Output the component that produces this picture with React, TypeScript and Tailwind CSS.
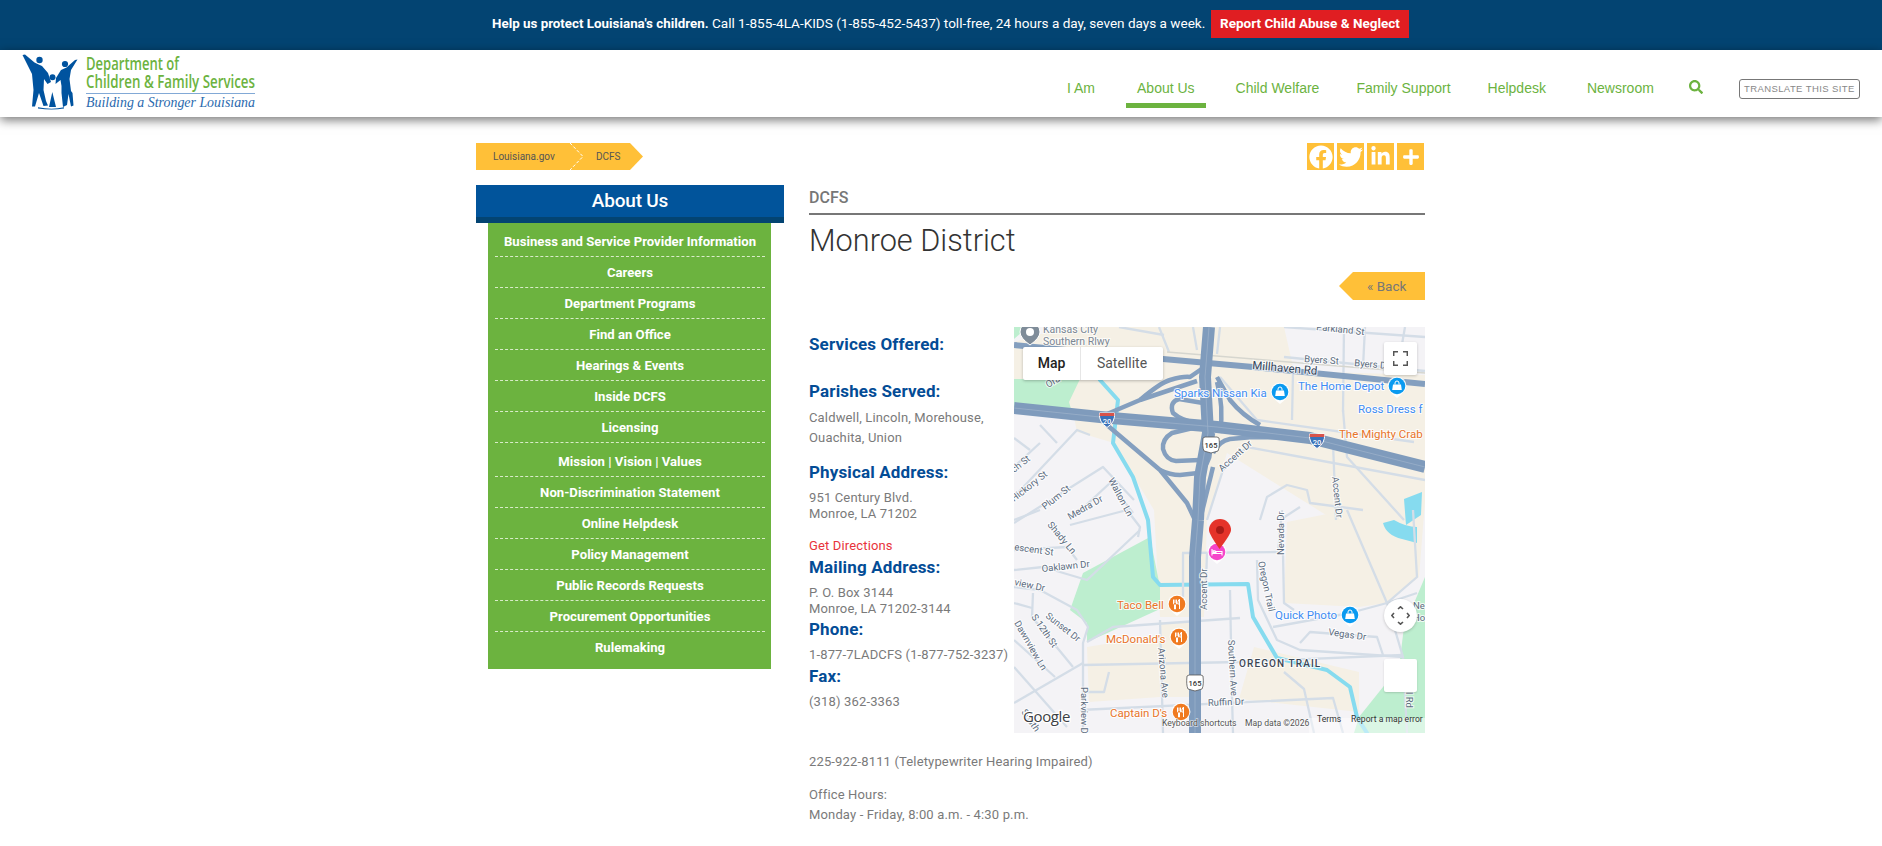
import React from "react";
import { FaFacebook, FaTwitter, FaLinkedinIn, FaPlus, FaSearch } from "react-icons/fa";

const sideItems: [string, string][] = [
  ["Business and Service Provider Information", "pt-[2px]"],
  ["Careers", "pt-[2px]"],
  ["Department Programs", "pt-[2px]"],
  ["Find an Office", "pt-[2px]"],
  ["Hearings & Events", "pt-[2px]"],
  ["Inside DCFS", "pt-[2px]"],
  ["Licensing", "pt-[2px]"],
  ["Mission | Vision | Values", "pt-[5px]"],
  ["Non-Discrimination Statement", "pt-[2px]"],
  ["Online Helpdesk", "pt-[2px]"],
  ["Policy Management", "pt-[2px]"],
  ["Public Records Requests", "pt-[2px]"],
  ["Procurement Opportunities", "pt-[2px]"],
  ["Rulemaking", "pt-[2px]"],
];

function Logo() {
  return (
    <svg width="240" height="64" viewBox="20 52 240 64" className="block">
      <path fill="#00539f" d="M22.5 55 L25 54.5 L34.5 62.5 Q39 64.5 42 66 L48 73 L51 82 L47.5 84 L44 79 L43.5 90 L46 101 L48 105.5 L43.5 106 L39 93 L35 106.5 L32 106.5 L33.5 90 L32 74 Z" />
      <circle cx="39.5" cy="60" r="3.2" fill="#00539f" />
      <circle cx="52.5" cy="77.3" r="3" fill="#00539f" />
      <path fill="#00539f" d="M77.5 59.5 L75 60 L66.5 67.5 L61 70 L56 78 L55.5 84 L60.5 80 L61.5 86 L61.5 93 L63 107 L67 105 L68.5 94 L71 106.5 L73.5 105.5 L72.5 93 L71 91 L69.5 79 L71 70 Z" />
      <circle cx="65" cy="64" r="3.1" fill="#00539f" />
      <path fill="#00539f" d="M52.3 92 L49 107 L56 107 Z M38 107.3 Q52 110 64 107.3 L64 108.5 Q52 110.7 38 108.5 Z" />
      <g fontFamily="'Open Sans',sans-serif" fontWeight="600" fill="#6cb33f">
        <text x="86" y="69.5" fontSize="18" textLength="93" lengthAdjust="spacingAndGlyphs">Department of</text>
        <text x="86" y="87.5" fontSize="18" textLength="169" lengthAdjust="spacingAndGlyphs">Children &amp; Family Services</text>
      </g>
      <rect x="86" y="93" width="169" height="1" fill="#82a9d6" />
      <text x="86" y="107" fontFamily="'Liberation Serif',serif" fontStyle="italic" fontSize="14" fill="#2a6aae" textLength="169" lengthAdjust="spacingAndGlyphs">Building a Stronger Louisiana</text>
    </svg>
  );
}

const major: string[] = [
  "M0 81 L86 90 L203 100 L296 111 L411 140",
  "M184 193 L186 150 L194 106 L191 50 L195 0",
  "M181 406 L181 230 L184 193",
];
const ramps: string[] = [
  "M86 90 L126 73 Q146 56 156 53 Q170 49 176 50 L189 41",
  "M126 73 L183 54",
  "M189 76 L165 72 Q155 75 159 86 Q168 94 183 96",
  "M183 100 L158 106 Q148 112 149 122 Q152 133 162 134 L186 133",
  "M93 98 L146 143 L173 176 L181 193",
  "M146 143 Q156 148 166 148 L184 146 Q196 136 196 125 L199 106",
  "M203 50 L216 73 Q228 88 246 98",
  "M203 55 Q210 80 206 106",
  "M199 126 Q205 114 216 112 L239 110 L296 111",
  "M186 193 L199 140",
];
const minor: string[] = [
  "M0 170 L63 103 L76 108", "M0 140 L26 116", "M0 111 L16 123", "M26 98 L43 116", "M0 196 L89 140 L120 173", "M56 193 L96 156 L119 186",
  "M193 193 L209 143 L233 120 L411 153", "M330 0 L329 85", "M279 46 L278 93", "M206 50 L243 93 L400 115", "M319 116 L322 193",
  "M329 83 L333 130 L390 193", "M246 193 L253 170 L273 158 L293 163 L296 176 L349 183", "M266 193 L286 180",
  "M270 0 L411 10", "M351 0 L349 40", "M391 0 L383 46", "M270 30 L411 44", "M105 0 L150 8", "M145 0 L155 25", "M179 0 L183 23", "M206 0 L203 27",
  "M0 243 L29 240 L73 253 L126 203", "M0 193 L26 183", "M0 223 L53 220 L63 233", "M56 198 L113 183 L126 200 L124 210",
  "M0 260 L26 263 L63 283 L74 300 L69 316 L69 406", "M19 266 L18 290 L59 340", "M0 276 L18 281", "M0 340 L53 400", "M0 376 L69 336", "M0 313 L41 350",
  "M73 315 L99 300 L226 291", "M69 338 L226 335 L389 328", "M66 383 L319 371 L329 406", "M146 293 L149 406", "M216 263 L218 370 L219 406",
  "M169 226 L169 280", "M193 226 L191 283", "M168 226 L263 225", "M268 183 L264 226", "M269 226 L270 276 L280 283",
  "M243 233 L244 273 L263 313 L286 323 L389 330", "M259 300 L336 286 L373 276 L403 266", "M286 316 L296 305 L363 310 L369 328",
  "M333 183 L373 276 L389 330 L393 406", "M399 183 L403 250 L373 276", "M270 345 L290 362 L300 406", "M70 365 L90 365 L95 345",
];

type L = [string, number, number, number];
const DARK = "#5b6b7d";
const roadLabels: L[] = [
  ["Parkland St", 302, 3, 6], ["Byers St", 290, 35, 4], ["Byers D", 340, 39, 5],
  ["Accent Dr", 208, 145, -42], ["Accent Dr", 318, 150, 84], ["ch St", 0, 146, -38], ["Hickory St", 0, 175, -38], ["Plum St", 31, 183, -38],
  ["Medra Dr", 56, 193, -30], ["Walton Ln", 94, 153, 62], ["Ora", 34, 61, -30], ["Shady Ln", 33, 198, 50], ["escent St", 0, 223, 8],
  ["Oaklawn Dr", 28, 245, -6], ["view Dr", 0, 258, 12], ["Sunset Dr", 31, 290, 38], ["S 12th St", 17, 290, 55], ["Dawnview Ln", 0, 296, 60],
  ["Parkview Dr", 67, 360, 90], ["Arizona Ave", 144, 321, 85], ["Accent Dr", 193, 283, -90], ["Oregon Trail", 244, 235, 78], ["Nevada Dr", 270, 228, -90],
  ["Southern Ave", 214, 313, 87], ["Vegas Dr", 314, 308, 8], ["Ruffin Dr", 194, 379, -2], ["Ne", 399, 282, 0], ["Ho", 399, 294, 0], ["l Rd", 392, 365, 90], ["South", 7, 385, 55],
];
const BLUE = "#3f8cf3";
const ORANGE = "#e8742a";
const poiLabels: [string, number, number, string][] = [
  ["Sparks Nissan Kia", 160, 70, BLUE], ["The Home Depot", 284, 63, BLUE], ["Ross Dress f", 344, 86, BLUE], ["The Mighty Crab", 325, 111, ORANGE],
  ["Taco Bell", 103, 282, ORANGE], ["McDonald's", 92, 316, ORANGE], ["Captain D's", 96, 390, ORANGE], ["Quick Photo", 261, 292, BLUE],
];

function Pin({ x, y, color, kind }: { x: number; y: number; color: string; kind: "bag" | "food" | "bed" }) {
  return (
    <g transform={`translate(${x} ${y})`}>
      <path d="M-9.5 0 A9.5 9.5 0 1 1 9.5 0 Q9 5 0 12 Q-9 5 -9.5 0 Z" fill="#fff" opacity="0.9" />
      <circle r="8.3" fill={color} />
      {kind === "bag" && (
        <g>
          <path d="M-4 -1.5 H4 L4.8 4 H-4.8 Z" fill="#fff" />
          <path d="M-2 -1.5 V-3 A2 2 0 0 1 2 -3 V-1.5" fill="none" stroke="#fff" strokeWidth="1" />
        </g>
      )}
      {kind === "food" && (
        <path d="M-3.5 -4.5 V-1 Q-3.5 0.5 -2.5 0.8 V5 H-1.5 V0.8 Q-0.5 0.5 -0.5 -1 V-4.5 M-2 -4.5 V-1 M2.5 5 V-5 Q0.7 -3.5 0.7 0 H2.5" fill="none" stroke="#fff" strokeWidth="1" />
      )}
      {kind === "bed" && <path d="M-5 -3 V3.5 M-5 1.5 H5 V3.5 M5 1.5 V-0.5 H-1 V1.5 M-3.7 -1.2 H-2 V0.6 H-3.7 Z" fill="none" stroke="#fff" strokeWidth="1.1" />}
    </g>
  );
}

function Shield({ x, y }: { x: number; y: number }) {
  return (
    <g transform={`translate(${x} ${y})`}>
      <path d="M-7.5 -7 H7.5 Q8.5 2 0 7.5 Q-8.5 2 -7.5 -7 Z" fill="#3a71b8" stroke="#fff" strokeWidth="1" />
      <path d="M-7.3 -7 H7.3 L7.3 -4 H-7.5 Z" fill="#d8534a" />
      <text x="0" y="3.5" textAnchor="middle" fontSize="7.5" fontWeight="500" fill="#fff" fontFamily="Roboto,sans-serif">20</text>
    </g>
  );
}

function US165({ x, y }: { x: number; y: number }) {
  return (
    <g transform={`translate(${x} ${y})`}>
      <path d="M-8 -7 L-6 -8 H6 L8 -7 Q9 2 7 6 L0 8 L-7 6 Q-9 2 -8 -7 Z" fill="#fff" stroke="#555" strokeWidth="0.8" />
      <text x="0" y="3" textAnchor="middle" fontSize="7.5" fontWeight="500" fill="#333" fontFamily="Roboto,sans-serif">165</text>
    </g>
  );
}

function MapArt() {
  return (
    <svg viewBox="0 0 411 406" className="block w-full h-full" fontFamily="Roboto,sans-serif">
      <rect width="411" height="406" fill="#f4f3f6" />
      <path fill="#f5f0e5" d="M50 0 L270 0 L280 44 L411 48 L411 175 L405 250 L373 276 L333 183 L320 193 L213 126 L193 193 L190 290 L146 290 L140 183 L120 150 L100 116 L63 105 L60 90 L0 85 L0 15 Z" />
      <path fill="#f5f0e5" d="M273 195 L333 183 L373 276 L345 280 L270 276 Z" />
      <path fill="#f5f0e5" d="M73 320 L146 308 L146 370 L75 375 Z" />
      <path fill="#f5f0e5" d="M147 295 L180 295 L180 370 L150 370 Z" />
      <path fill="#f5f0e5" d="M240 320 L345 345 L345 385 L225 372 Z" />
      <path fill="#bdeecf" d="M0 52 L66 52 L55 75 L60 92 L0 86 Z" />
      <path fill="#bdeecf" d="M0 0 L14 0 L0 12 Z" />
      <path fill="#bdeecf" d="M56 283 L69 246 L136 210 L146 260 L146 282 L100 303 L73 315 L73 296 Z" />
      <path fill="#bdeecf" d="M340 406 L411 406 L411 250 L390 300 L385 340 L345 390 Z" />
      <g fill="none" stroke="#86dbef" strokeLinejoin="round" strokeLinecap="round">
        <path strokeWidth="4" d="M86 53 L104 73 L99 116 L119 150 L134 193 L139 250 L146 258 L234 257 L239 290 L263 331 L313 343 L336 360 L343 390 L353 406" />
      </g>
      <path fill="#86dbef" d="M390 172 L408 165 L407 188 L392 198 Z M369 196 L380 193 Q392 200 403 200 L403 216 L388 212 Q372 208 369 196 Z" />
      <g fill="none" stroke="#d4dde7" strokeWidth="2.3" strokeLinejoin="round">
        {minor.map((d, i) => <path key={i} d={d} />)}
        <path d="M153 25 L411 46" stroke="#d6d6cf" strokeWidth="1.5" />
      </g>
      <path d="M0 18 L149 32 L239 40 L411 57" fill="none" stroke="#849fbf" strokeWidth="6" />
      <g fill="none" stroke="#849fbf" strokeLinejoin="round" strokeWidth="4.5">
        {ramps.map((d, i) => <path key={i} d={d} />)}
      </g>
      <g fill="none" strokeLinejoin="round">
        {major.map((d, i) => <path key={i} d={d} stroke="#7f9bbc" strokeWidth="12" />)}
        {major.map((d, i) => <path key={i} d={d} stroke="#9bb0c9" strokeWidth="0.8" />)}
      </g>
      <Shield x={93} y={93} />
      <Shield x={303} y={114} />
      <US165 x={197} y={118} />
      <US165 x={181} y={356} />
      <g fill={DARK} fontSize="9.5" stroke="#fff" strokeWidth="2" paintOrder="stroke" strokeOpacity="0.8">
        {roadLabels.map(([t, x, y, r], i) => (
          <text key={i} x={x} y={y} transform={`rotate(${r} ${x} ${y})`}>{t}</text>
        ))}
        <text x="238" y="42" transform="rotate(5 238 42)" fontSize="11.5" fill="#37465a">Millhaven Rd</text>
        <text x="225" y="340" fontSize="10" fontWeight="500" letterSpacing="1.1" fill="#3c4654">OREGON TRAIL</text>
      </g>
      <g fontSize="11.5" stroke="#fff" strokeWidth="2" paintOrder="stroke" strokeOpacity="0.85">
        {poiLabels.map(([t, x, y, c], i) => (
          <text key={i} x={x} y={y} fill={c}>{t}</text>
        ))}
      </g>
      <g fontSize="10.5" fill="#7b8794" stroke="#fff" strokeWidth="2" paintOrder="stroke" strokeOpacity="0.7">
        <text x="29" y="6">Kansas City</text>
        <text x="29" y="18">Southern Rlwy</text>
      </g>
      <path d="M16 18 Q6 11 6 5 A10 10 0 0 1 26 5 Q26 11 16 18 Z" fill="#7f8c99" stroke="#fff" strokeWidth="1" />
      <circle cx="16" cy="5" r="4" fill="#fff" />
      <Pin x={266} y={65} color="#0a9af0" kind="bag" />
      <Pin x={383} y={59} color="#0a9af0" kind="bag" />
      <Pin x={336} y={288} color="#0a9af0" kind="bag" />
      <Pin x={163} y={277} color="#f07a20" kind="food" />
      <Pin x={165} y={310} color="#f07a20" kind="food" />
      <Pin x={167} y={385} color="#f07a20" kind="food" />
      <Pin x={203} y={225} color="#f545c9" kind="bed" />
      <path d="M205.5 222 Q195 207 195 203 A11 11 0 0 1 217 203 Q217 207 205.5 222 Z" fill="#e5332a" />
      <circle cx="206" cy="203" r="4" fill="#a91b17" />
      <rect x="295" y="391" width="116" height="15" fill="#fff" opacity="0.45" />
      <g fill="#555" fontSize="8.6">
        <text x="148" y="399" stroke="#fff" strokeWidth="1.5" paintOrder="stroke" strokeOpacity="0.6">Keyboard shortcuts</text>
        <text x="231" y="399" stroke="#fff" strokeWidth="1.5" paintOrder="stroke" strokeOpacity="0.6">Map data ©2026</text>
        <text x="303" y="395" fill="#333">Terms</text>
        <text x="337" y="395" fill="#333">Report a map error</text>
      </g>
      <text x="9" y="395" fontSize="15" fontWeight="500" letterSpacing="-0.4" fontFamily="'Open Sans',sans-serif" fill="#3c4043" stroke="#fff" strokeWidth="2.5" paintOrder="stroke">Google</text>
    </svg>
  );
}

function Heading({ children, className }: { children: React.ReactNode; className: string }) {
  return <h3 className={`text-[17px] leading-[20px] font-bold text-[#034c96] tracking-[0.15px] ${className}`}>{children}</h3>;
}

export default function App() {
  return (
    <div className="min-h-[846px] bg-white font-['Roboto',sans-serif] text-[#7a7a7a] overflow-hidden">
      <div className="h-[50px] bg-[#034472] flex items-center pl-[492px] pb-[3px] text-white text-[13.55px]">
        <p className="w-[719px] whitespace-nowrap"><strong className="font-bold text-[13.35px]">Help us protect Louisiana's children.</strong> Call 1-855-4LA-KIDS (1-855-452-5437) toll-free, 24 hours a day, seven days a week.</p>
        <a className="w-[198px] h-[28px] bg-[#e01e22] flex items-center justify-center font-bold text-[13.5px]">Report Child Abuse &amp; Neglect</a>
      </div>

      <header className="relative z-10 h-[67px] bg-white flex shadow-[0_3px_10px_rgba(0,0,0,0.55)] font-['Liberation_Sans',sans-serif] text-[14px] text-[#6cb33f]">
        <div className="pl-[20px] pt-[2px] w-[1067px] shrink-0"><Logo /></div>
        <nav className="flex items-start">
          <a className="pt-[28px]">I Am</a>
          <a className="ml-[31px] px-[11px] pt-[28px] h-[58px] border-b-[5px] border-[#6cb33f]">About Us</a>
          <a className="ml-[30px] pt-[28px]">Child Welfare</a>
          <a className="ml-[37px] pt-[28px]">Family Support</a>
          <a className="ml-[37px] pt-[28px]">Helpdesk</a>
          <a className="ml-[41px] pt-[28px]">Newsroom</a>
          <span className="ml-[35px] pt-[30px] text-[14px]"><FaSearch /></span>
          <a className="ml-[36px] mt-[29px] w-[121px] h-[20px] border border-[#777] rounded-[3px] flex items-center justify-center text-[9.5px] tracking-[0.4px] text-[#888]">TRANSLATE THIS SITE</a>
        </nav>
      </header>

      <main className="pl-[476px] w-[1425px]">
        <div className="pt-[26px] flex justify-between items-start">
          <div className="flex h-[27px] w-[167px] text-[10px] leading-[27px] text-[#555] bg-[#ffc038] [clip-path:polygon(0_0,154px_0,100%_50%,154px_100%,0_100%)]">
            <a className="pl-[17px] w-[93px]">Louisiana.gov</a>
            <span className="relative w-[27px] shrink-0">
              <svg width="16" height="27" viewBox="0 0 16 27" className="absolute left-0 top-0">
                <path d="M1 0 L14 13.5 L1 27" fill="none" stroke="#fff" strokeWidth="1" strokeDasharray="3 2" />
              </svg>
            </span>
            <a>DCFS</a>
          </div>
          <div className="flex gap-[3px] mr-[1px] text-white">
            <span className="w-[27px] h-[27px] bg-[#ffc038] flex items-center justify-center text-[24px]"><FaFacebook /></span>
            <span className="w-[27px] h-[27px] bg-[#ffc038] flex items-center justify-center text-[24px]"><FaTwitter /></span>
            <span className="w-[27px] h-[27px] bg-[#ffc038] flex items-center justify-center text-[21px]"><FaLinkedinIn /></span>
            <span className="w-[27px] h-[27px] bg-[#ffc038] flex items-center justify-center text-[18px]"><FaPlus /></span>
          </div>
        </div>

        <div className="flex gap-[25px] pt-[15px] items-start">
          <aside className="w-[308px] shrink-0">
            <h2 className="h-[38px] bg-[#01549b] border-b-[6px] border-[#034472] text-white text-center text-[19px] tracking-[-0.2px] leading-[32px] font-medium">About Us</h2>
            <ul className="ml-[12px] mr-[13px] pl-[7px] pr-[6px] pt-[3px] pb-[7px] bg-[#6cb33f] text-white text-[13.15px] font-bold text-center">
              {sideItems.map(([t, c], i) => (
                <li key={i} className={`${c} leading-[28px] ${i < sideItems.length - 1 ? "border-b border-dashed border-[#d8ecc8]" : ""}`}>{t}</li>
              ))}
            </ul>
          </aside>

          <section className="w-[616px]">
            <div className="h-[30px] border-b-2 border-[#777] text-[16px] font-medium leading-[26px] text-[#777]">DCFS</div>
            <h1 className="pt-[7px] text-[30.7px] leading-[38px] font-light text-[#333]">Monroe District</h1>
            <div className="pt-[12px] flex justify-end">
              <a className="w-[86px] h-[28px] pl-[28px] leading-[28px] text-[13.5px] text-[#777] bg-[#ffc038] [clip-path:polygon(14px_0,100%_0,100%_100%,14px_100%,0_50%)]">« Back</a>
            </div>
            <div className="flex pt-[27px]">
              <div className="w-[205px] shrink-0 text-[13px] tracking-[0.15px] whitespace-nowrap">
                <Heading className="pt-[7px] box-content">Services Offered:</Heading>
                <Heading className="mt-[27px]">Parishes Served:</Heading>
                <p className="mt-[7px] leading-[20px]">Caldwell, Lincoln, Morehouse,<br />Ouachita, Union</p>
                <Heading className="mt-[14px]">Physical Address:</Heading>
                <p className="mt-[8px] leading-[16px]">951 Century Blvd.<br />Monroe, LA 71202</p>
                <p className="mt-[16px] leading-[16px] text-[#e8333b]">Get Directions</p>
                <Heading className="mt-[3px]">Mailing Address:</Heading>
                <p className="mt-[8px] leading-[16px]">P. O. Box 3144<br />Monroe, LA 71202-3144</p>
                <Heading className="mt-[2px]">Phone:</Heading>
                <p className="mt-[8px] leading-[16px]">1-877-7LADCFS (1-877-752-3237)</p>
                <Heading className="mt-[3px]">Fax:</Heading>
                <p className="mt-[8px] leading-[16px]">(318) 362-3363</p>
              </div>
              <div className="relative w-[411px] h-[406px] overflow-hidden">
                <MapArt />
                <div className="absolute left-[9px] top-[20px] h-[33px] flex bg-white rounded-[2px] shadow-[0_1px_3px_rgba(0,0,0,0.25)] text-[14px] leading-[33px]">
                  <span className="w-[58px] text-center font-medium text-[#222] border-r border-[#e6e6e6]">Map</span>
                  <span className="w-[82px] text-center text-[#565656]">Satellite</span>
                </div>
                <div className="absolute left-[370px] top-[15px] w-[33px] h-[33px] bg-white rounded-[2px] shadow-[0_1px_3px_rgba(0,0,0,0.2)] flex items-center justify-center">
                  <svg width="15" height="15" viewBox="0 0 15 15" fill="none" stroke="#555" strokeWidth="1.5">
                    <path d="M0.7 5 V0.7 H5 M10 0.7 H14.3 V5 M14.3 10 V14.3 H10 M5 14.3 H0.7 V10" />
                  </svg>
                </div>
                <div className="absolute left-[370px] top-[272px] w-[33px] h-[33px] bg-white rounded-full shadow-[0_1px_3px_rgba(0,0,0,0.2)] flex items-center justify-center">
                  <svg width="19" height="19" viewBox="0 0 19 19" fill="none" stroke="#555" strokeWidth="1.6">
                    <path d="M7 3 L9.5 0.8 L12 3 M7 16 L9.5 18.2 L12 16 M3 7 L0.8 9.5 L3 12 M16 7 L18.2 9.5 L16 12" />
                  </svg>
                </div>
                <div className="absolute left-[370px] top-[332px] w-[33px] h-[33px] bg-white rounded-[2px] shadow-[0_1px_2px_rgba(0,0,0,0.15)]" />
              </div>
            </div>
            <p className="mt-[19px] text-[13px] tracking-[0.15px] leading-[20px]">225-922-8111 (Teletypewriter Hearing Impaired)</p>
            <p className="mt-[13px] text-[13px] tracking-[0.15px] leading-[20px]">Office Hours:<br />Monday - Friday, 8:00 a.m. - 4:30 p.m.</p>
          </section>
        </div>
      </main>
    </div>
  );
}
